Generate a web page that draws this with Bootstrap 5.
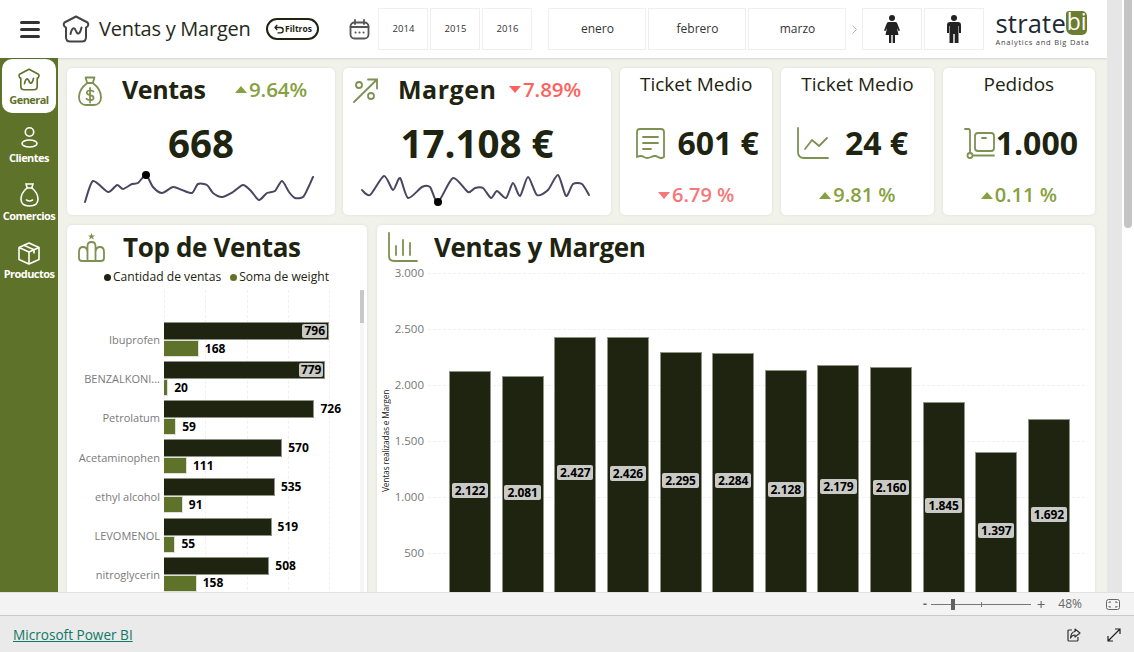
<!DOCTYPE html>
<html lang="es">
<head>
    <meta charset="UTF-8">
    <meta name="viewport" content="width=device-width, initial-scale=1.0">
    <title>Ventas y Margen</title>
    <link href="https://cdn.jsdelivr.net/npm/bootstrap@5.3.0/dist/css/bootstrap.min.css" rel="stylesheet">
    <style>
        html, body { height: 100%; overflow: hidden; }
        body { font-family: "Open Sans", "Noto Sans", sans-serif; color: #1e2410; background: #fff; }
        svg { display: block; flex: none; }

        .app-shell { height: 652px; }
        .app-top { height: 592px; }
        .report { width: 1107px; background: #f1f2ea; }
        .gutter { width: 15px; background: #e6e6e6; }
        .sbar { width: 12px; background: #fff; padding: 0 2px; }
        .sbar-thumb { height: 228px; background: #c4c4c4; border-radius: 0 0 4px 4px; }

        /* header */
        .topbar { height: 58px; background: #fff; box-shadow: 0 1px 2px rgba(90, 90, 70, .18); position: relative; z-index: 2; }
        .burger { width: 20px; margin-left: 20px; margin-right: 22px; }
        .burger i { display: block; height: 3px; background: #333; border-radius: 2px; margin: 4px 0; }
        .report-title { font-size: 20px; margin: 0 16px 0 9px; color: #252a20; white-space: nowrap; letter-spacing: -.25px; }
        .pill { width: 53px; height: 22px; border: 2px solid #1e2410; border-radius: 11px; font-size: 8.5px; font-weight: 700; gap: 1px; margin-right: 30px; }
        .slicer { border: 1px solid #efefef; height: 42px; color: #333; background: #fff; }
        .slicer-y { width: 50px; font-size: 9.5px; margin-right: 2px; }
        .slicer-m { width: 98px; font-size: 12px; margin-right: 2px; }
        .slicer-g { width: 60px; margin-right: 2px; }
        .chev { width: 16px; margin-right: 0; color: #aaa; }
        .brand { margin-left: 9px; width: 92px; }
        .brand-word { font-size: 25.5px; line-height: 24px; height: 24px; color: #1b2a33; letter-spacing: .2px; }
        .brand-bi { width: 24px; height: 24px; background: #6a7d30; border-radius: 3px 5px 5px 7px; color: #fff; font-size: 23px; line-height: 20px; text-align: center; margin-left: auto; letter-spacing: 0; }
        .brand-sub { font-size: 7.5px; letter-spacing: .75px; color: #444; white-space: nowrap; line-height: 10px; margin-top: 2px; }

        /* sidebar */
        .sidenav { width: 58px; background: #5f7229; padding: 1px 2px 0; }
        .side-item { width: 54px; height: 54px; margin-bottom: 4px; padding-top: 7px; border-radius: 10px; color: #fff; }
        .side-item.active { background: #fff; color: #5f7229; }
        .side-ico { height: 26px; }
        .side-label { font-size: 11px; font-weight: 700; line-height: 14px; margin-top: 1px; letter-spacing: -.55px; white-space: nowrap; }

        /* cards */
        .board { padding: 10px 12px 0 9px; gap: 10px; }
        .panel { background: #fff; border: 0; border-radius: 5px; box-shadow: 0 0 3px rgba(120, 120, 100, .16); }
        .kpi-row { gap: 9px; height: 147px; flex: none; }
        .kpi-wide { width: 268px; }
        .kpi-wide:first-child { margin-right: -1px; }
        .kpi-small { width: 152.5px; }
        .kpi-head { height: 44px; padding-top: 7px; }
        .kpi-name { font-size: 25px; font-weight: 700; line-height: 28px; letter-spacing: -.4px; }
        .kpi-name-m { letter-spacing: .5px; margin-left: -1px; }
        .kpi-delta { font-size: 20.5px; font-weight: 600; letter-spacing: -.1px; line-height: 28px; gap: 2px; margin-left: auto; }
        .delta-v { margin-right: 28px; }
        .delta-m { margin-right: 30px; }
        .kpi-value { height: 56px; font-size: 38.5px; font-weight: 700; line-height: 56px; padding-top: 3px; box-sizing: border-box; }
        .kpi-ico-a { margin: 1px 20px 0 11px; }
        .kpi-ico-b { margin: 3px 21px 0 10px; }
        .panel-head .kpi-ico-a { margin-top: 2px; }
        .panel-head .ico-top { margin-right: 18px; }
        .panel-head .ico-mix { margin-right: 16px; }
        .tick-name { height: 32px; padding-top: 4px; font-size: 19px; line-height: 24px; text-align: center; white-space: nowrap; }
        .tick-body { height: 86px; }
        .tick-a { padding-left: 3px; }
        .tick-b { padding-right: 10px; }
        .tick-c { padding-left: 4px; }
        .tick-value { font-size: 32px; font-weight: 700; line-height: 40px; white-space: nowrap; }
        .tick-delta { height: 18px; line-height: 18px; font-size: 20px; font-weight: 600; gap: 2px; }
        .is-up { color: #87a040; }
        .is-down { color: #fd625e; }
        .is-down2 { color: #f4777a; }
        .tri-up, .tri-down { width: 0; height: 0; border-left: 6px solid transparent; border-right: 6px solid transparent; }
        .tri-up { border-bottom: 7px solid currentColor; }
        .tri-down { border-top: 7px solid currentColor; }

        /* lower panels */
        .lower-row { gap: 10px; flex: none; height: 420px; }
        .top-panel { width: 300px; }
        .mix-panel { width: 718px; }
        .panel-title { font-size: 26px; font-weight: 700; line-height: 34px; white-space: nowrap; letter-spacing: -.35px; }
        .panel-head { height: 42px; padding-top: 5px; }
        .legend-line { font-size: 12.1px; line-height: 16px; gap: 2px; padding-left: 37px; margin-top: 2px; white-space: nowrap; }
        .legend-dot { width: 7px; height: 7px; border-radius: 50%; margin-top: 1px; }
        .dot-dark { background: #1e2410; }
        .dot-green { background: #5f7229; margin-left: 7px; }

        .hplot { margin-top: 5px; padding-top: 30px; height: 340px; }
        .hgrid { left: 97px; top: 0; width: 166px; height: 100%; }
        .hgrid i { width: 0; border-left: 1px dashed #f0f0f0; }
        .hrow { height: 39.1px; position: relative; }
        .hname { width: 93px; font-size: 11px; color: #7a7a7a; text-align: right; white-space: nowrap; margin-right: 4px; padding-top: 2px; }
        .hbar { height: 18px; background: #1e2410; border: 1px solid #8f9286; border-left-width: 0; }
        .hbar-b { height: 17px; background: #5f7229; border: 1px solid #dfe1d8; border-left-width: 0; }
        .hval { font-size: 12px; font-weight: 700; color: #000; line-height: 14px; margin-left: 6px; }
        .hval.in-bar { background: #c9cac5; border-radius: 2px; padding: 0 2px; margin: 0 1px 0 0; }
        .hscroll { left: 293px; top: 0; width: 4px; height: 100%; background: #f5f5f5; }
        .hscroll i { display: block; height: 33px; background: #c8c8c8; }

        .vaxis-name { width: 10px; margin-left: 4px; font-size: 8.5px; writing-mode: vertical-rl; transform: rotate(180deg); text-align: center; height: 336px; white-space: nowrap; letter-spacing: -.25px; color: #222; line-height: 10px; }
        .vticks { width: 33px; margin-right: 4px; font-size: 11.5px; color: #777; text-align: right; }
        .vticks div { height: 56.05px; line-height: 0; }
        .vplot { width: 657px; height: 336px; padding: 0 15px 0 21px; }
        .vgrid div { height: 56.05px; border-top: 1px dashed #f0f0f0; }
        .vbar { width: 42px; background: #1e2410; outline: 1px solid #8f9286; outline-offset: -1px; position: relative; }
        .vval { background: #c9cac5; border-radius: 2px; font-size: 12px; font-weight: 700; color: #000; padding: 0 3px; line-height: 15px; letter-spacing: -.1px; }
        .plot-row { margin-top: 6px; }

        /* power bi footer */
        .zoombar { height: 23px; background: #f3f3f3; border-top: 1px solid #e2e2e2; color: #666; font-size: 12px; padding-right: 14px; }
        .zoom-minus { font-weight: 700; }
        .zoom-plus { font-size: 15px; font-weight: 500; }
        .zoom-pct { margin: 0 24px 0 13px; }
        .zoom-track { width: 100px; height: 1px; background: #777; margin: 0 6px 0 4px; position: relative; }
        .zoom-thumb { position: absolute; left: 20px; top: -5px; width: 4px; height: 11px; background: #606060; }
        .zoom-mark { position: absolute; left: 50px; top: -2px; width: 1px; height: 5px; background: #777; }
        .pbi-foot { height: 37px; background: #eaeaea; border-top: 1px solid #c9c9c9; padding: 2px 13px 0; }
        .pbi-link { color: #117865; font-size: 13.6px; font-weight: 500; }
        .foot-expand { margin-left: 26px; }
    </style>
</head>
<body>
<div class="app-shell d-flex flex-column">
    <div class="app-top d-flex">
        <div class="report d-flex flex-column overflow-hidden">
            <header class="topbar d-flex align-items-center flex-shrink-0">
                <div class="burger"><i></i><i></i><i></i></div>
                <svg width="28" height="28" viewBox="0 0 28 28" fill="none" stroke="#444" stroke-width="2" stroke-linejoin="round" stroke-linecap="round"><path d="M14 1.5 25.5 7.5Q27 9 25.5 11.5L24 12.5V22Q24 26.5 20 26.5H8Q4 26.5 4 22V12.5L2.500 11.500Q1 9 2.500 7.500Z"/><path d="M8.500 19C10 12 12.500 12 14 16S18 19.500 19.500 12.500"/></svg>
                <div class="report-title">Ventas y Margen</div>
                <div class="pill d-flex align-items-center justify-content-center">
                    <svg width="10" height="10" viewBox="0 0 10 10" fill="none" stroke="#1e2410" stroke-width="1.300"><path d="M1 3.500H6.500A2.500 2.500 0 0 1 6.500 8.800H3.500"/><path d="M3.200 1 1 3.500 3.200 6"/></svg>
                    <span>Filtros</span>
                </div>
                <svg class="me-2" width="21" height="21" viewBox="0 0 21 21" fill="none" stroke="#555" stroke-width="1.800" stroke-linecap="round"><rect x="1.500" y="3.500" width="18" height="16" rx="4"/><path d="M1.500 8H19.500M6 1V5M15 1V5"/><path d="M6.500 13.500h.1M10.500 13.500h.1M14.500 13.500h.1" stroke-width="2"/></svg>
                <div class="slicer slicer-y d-flex align-items-center justify-content-center ms-0">2014</div>
                <div class="slicer slicer-y d-flex align-items-center justify-content-center">2015</div>
                <div class="slicer slicer-y d-flex align-items-center justify-content-center me-3">2016</div>
                <div class="slicer slicer-m d-flex align-items-center justify-content-center">enero</div>
                <div class="slicer slicer-m d-flex align-items-center justify-content-center">febrero</div>
                <div class="slicer slicer-m d-flex align-items-center justify-content-center me-0">marzo</div>
                <div class="chev d-flex justify-content-center">
                    <svg width="5" height="9" viewBox="0 0 5 9" fill="none" stroke="#b5b5b5"><path d="M.5.500 4.500 4.500.5 8.500"/></svg>
                </div>
                <div class="slicer slicer-g d-flex align-items-center justify-content-center">
                    <svg width="16" height="28" viewBox="0 0 16 28" fill="#222"><circle cx="8" cy="3" r="3"/><path d="M4.500 7H11.500Q13 7 13.500 9L16 15.500 14.500 16 13 13 14.500 20H11V28H8.700V20H7.300V28H5V20H1.500L3 13 1.500 16 0 15.500 2.500 9Q3 7 4.500 7Z"/></svg>
                </div>
                <div class="slicer slicer-g d-flex align-items-center justify-content-center">
                    <svg width="14" height="28" viewBox="0 0 14 28" fill="#222"><circle cx="7" cy="3" r="3"/><path d="M3 7H11Q14 7 14 10V18H12V11H11.500V28H7.700V19H6.300V28H2.500V11H2V18H0V10Q0 7 3 7Z"/></svg>
                </div>
                <div class="brand">
                    <div class="d-flex brand-word"><span>strate</span><span class="brand-bi">bi</span></div>
                    <div class="brand-sub">Analytics and Big Data</div>
                </div>
            </header>
            <div class="d-flex flex-grow-1 overflow-hidden">
                <nav class="sidenav nav flex-column flex-nowrap">
                    <div class="side-item active text-center">
                        <div class="side-ico d-flex justify-content-center align-items-center">
                            <svg width="24" height="23" viewBox="0 0 28 28" fill="none" stroke="currentColor" stroke-width="2" stroke-linejoin="round" stroke-linecap="round"><path d="M14 1.500 25.500 7.500Q27 9 25.500 11.500L24 12.500V22Q24 26.500 20 26.500H8Q4 26.500 4 22V12.500L2.500 11.500Q1 9 2.500 7.500Z"/><path d="M8.500 19C10 12 12.500 12 14 16S18 19.500 19.500 12.500"/></svg>
                        </div>
                        <div class="side-label">General</div>
                    </div>
                    <div class="side-item text-center">
                        <div class="side-ico d-flex justify-content-center align-items-center">
                            <svg width="17" height="21" viewBox="0 0 17 21" fill="none" stroke="currentColor" stroke-width="1.600"><circle cx="8.500" cy="5" r="4.200"/><ellipse cx="8.500" cy="16.500" rx="7.500" ry="3.500"/></svg>
                        </div>
                        <div class="side-label">Clientes</div>
                    </div>
                    <div class="side-item text-center">
                        <div class="side-ico d-flex justify-content-center align-items-center">
                            <svg width="19" height="24" viewBox="0 0 19 24" fill="none" stroke="currentColor" stroke-width="1.600" stroke-linecap="round"><path d="M6 1H13L11.800 5H7.200Z"/><path d="M7 5C3.500 8 1 11.500 1 16 1 21 4 23 9.500 23S18 21 18 16C18 11.500 15.500 8 12 5"/><path d="M6.500 17Q9.500 19 12.500 17"/></svg>
                        </div>
                        <div class="side-label">Comercios</div>
                    </div>
                    <div class="side-item text-center">
                        <div class="side-ico d-flex justify-content-center align-items-center">
                            <svg width="22" height="23" viewBox="0 0 22 23" fill="none" stroke="currentColor" stroke-width="1.600" stroke-linejoin="round"><path d="M11 1 21 5.500V17.500L11 22 1 17.500V5.500Z"/><path d="M1 5.500 11 10 21 5.500M11 10V22M6 3.300 16 7.800V11.500"/></svg>
                        </div>
                        <div class="side-label">Productos</div>
                    </div>
                </nav>

                <main class="board flex-grow-1 d-flex flex-column overflow-hidden">
                    <section class="kpi-row d-flex">
                        <div class="panel kpi-wide">
                            <div class="kpi-head d-flex align-items-start">
                                <svg class="kpi-ico-a" width="24" height="30" viewBox="0 0 24 30" fill="none" stroke="#7d9152" stroke-width="1.800" stroke-linejoin="round" stroke-linecap="round"><path d="M7.500 1.500H16.500L14.800 7H9.200Z"/><path d="M9.200 7C4 11 1 16 1 21 1 26 4 29 8 29H16C20 29 23 26 23 21 23 16 20 11 14.800 7"/><path d="M15.500 15.500C14.500 13.800 9.500 13.800 8.800 16 8.300 18.500 11 18.800 12 19S16 20 15.500 22.500C14.800 24.800 9.500 24.500 8.500 22.800M12 12V26.500"/></svg>
                                <div class="kpi-name">Ventas</div>
                                <div class="kpi-delta delta-v is-up d-flex align-items-center"><span class="tri-up"></span>9.64%</div>
                            </div>
                            <div class="kpi-value text-center">668</div>
                            <svg id="sparkA" width="268" height="43" viewBox="67 168 268 43" fill="none"></svg>
                        </div>
                        <div class="panel kpi-wide">
                            <div class="kpi-head d-flex align-items-start">
                                <svg class="kpi-ico-b" width="25" height="25" viewBox="0 0 25 25" fill="none" stroke="#7d9152" stroke-width="1.800" stroke-linecap="round"><path d="M1 24 24 1.500M15 1.500H24V10.500"/><circle cx="6" cy="7" r="3"/><circle cx="18" cy="18" r="3"/></svg>
                                <div class="kpi-name kpi-name-m">Margen</div>
                                <div class="kpi-delta delta-m is-down d-flex align-items-center"><span class="tri-down"></span>7.89%</div>
                            </div>
                            <div class="kpi-value text-center">17.108 €</div>
                            <svg id="sparkB" width="268" height="43" viewBox="343 168 268 43" fill="none"></svg>
                        </div>
                        <div class="panel kpi-small">
                            <div class="tick-name">Ticket Medio</div>
                            <div class="tick-body tick-a d-flex align-items-center justify-content-center gap-2">
                                <svg class="me-1" width="29" height="31" viewBox="0 0 29 31" fill="none" stroke="#7d9152" stroke-width="1.800" stroke-linecap="round" stroke-linejoin="round"><path d="M1 4Q1 1 4 1H25Q28 1 28 4V29Q25 31 22 29T15 29 8 29 1 29Z"/><path d="M7 9H22M7 15H22M7 21H15"/></svg>
                                <div class="tick-value">601 €</div>
                            </div>
                            <div class="tick-delta is-down2 d-flex align-items-center justify-content-center"><span class="tri-down"></span>6.79 %</div>
                        </div>
                        <div class="panel kpi-small">
                            <div class="tick-name">Ticket Medio</div>
                            <div class="tick-body tick-b d-flex align-items-center justify-content-center gap-3">
                                <svg width="32" height="32" viewBox="0 0 32 32" fill="none" stroke="#7d9152" stroke-width="1.800" stroke-linecap="round" stroke-linejoin="round"><path d="M1 1V25Q1 31 7 31H31"/><path d="M8 22 15 13 22 19 30 11"/></svg>
                                <div class="tick-value">24 €</div>
                            </div>
                            <div class="tick-delta is-up d-flex align-items-center justify-content-center"><span class="tri-up"></span>9.81 %</div>
                        </div>
                        <div class="panel kpi-small">
                            <div class="tick-name">Pedidos</div>
                            <div class="tick-body tick-c d-flex align-items-center justify-content-center">
                                <svg width="32" height="31" viewBox="0 0 32 31" fill="none" stroke="#7d9152" stroke-width="1.800" stroke-linecap="round" stroke-linejoin="round"><path d="M1 1H4.500Q6 1 6 3V25"/><circle cx="6" cy="27.500" r="2.500"/><path d="M9 27.500H30"/><rect x="11" y="5" width="19" height="18" rx="3"/><path d="M18 10H22"/></svg>
                                <div class="tick-value">1.000</div>
                            </div>
                            <div class="tick-delta is-up d-flex align-items-center justify-content-center"><span class="tri-up"></span>0.11 %</div>
                        </div>
                    </section>

                    <section class="lower-row d-flex">
                        <div class="panel top-panel overflow-hidden">
                            <div class="panel-head d-flex align-items-start">
                                <svg class="kpi-ico-a ico-top" width="27" height="30" viewBox="0 0 27 30" fill="none" stroke="#7d9152" stroke-width="1.800" stroke-linejoin="round"><path d="M13.500 1 14.500 3.500H17L15 5 15.800 7.500 13.500 6 11.200 7.500 12 5 10 3.500H12.500Z" fill="#7d9152" stroke="none"/><path d="M9.500 29H4Q1 29 1 26V20Q1 15 5 15T9.500 20ZM9.500 29V14Q9.500 10 13.500 10T17.500 14V29ZM17.500 29H23Q26 29 26 26V20Q26 15 22 15T17.500 20Z"/></svg>
                                <div class="panel-title">Top de Ventas</div>
                            </div>
                            <div class="legend-line d-flex align-items-center">
                                <span class="legend-dot dot-dark"></span><span>Cantidad de ventas</span>
                                <span class="legend-dot dot-green"></span><span>Soma de weight</span>
                            </div>
                            <div class="hplot position-relative">
                                <div class="hgrid position-absolute d-flex justify-content-between"><i></i><i></i><i></i><i></i><i></i></div>
                                <div class="hscroll position-absolute"><i></i></div>
                                <div id="hbars"></div>
                            </div>
                        </div>

                        <div class="panel mix-panel overflow-hidden">
                            <div class="panel-head d-flex align-items-start">
                                <svg class="kpi-ico-a ico-mix" width="30" height="30" viewBox="0 0 30 30" fill="none" stroke="#7d9152" stroke-width="1.800" stroke-linecap="round"><path d="M1 1V24Q1 29 6 29H29"/><path d="M8 14V23M15 8V23M22 11V23"/></svg>
                                <div class="panel-title">Ventas y Margen</div>
                            </div>
                            <div class="plot-row d-flex">
                                <div class="vaxis-name">Ventas realizadas e Margen</div>
                                <div class="vticks">
                                    <div>3.000</div><div>2.500</div><div>2.000</div><div>1.500</div><div>1.000</div><div>500</div>
                                </div>
                                <div class="vplot position-relative">
                                    <div class="vgrid position-absolute top-0 start-0 w-100"><div></div><div></div><div></div><div></div><div></div><div></div></div>
                                    <div id="vbars" class="d-flex justify-content-between align-items-end h-100 position-relative"></div>
                                </div>
                            </div>
                        </div>
                    </section>
                </main>
            </div>
        </div>
        <div class="gutter"></div>
        <div class="sbar"><div class="sbar-thumb"></div></div>
    </div>

    <div class="zoombar d-flex align-items-center justify-content-end">
        <span class="zoom-minus">-</span>
        <div class="zoom-track"><span class="zoom-thumb"></span><span class="zoom-mark"></span></div>
        <span class="zoom-plus">+</span>
        <span class="zoom-pct">48%</span>
        <svg width="14" height="11" viewBox="0 0 14 11" fill="none" stroke="#666"><rect x=".5" y=".5" width="13" height="10" rx="2"/><path d="M3 4V3H5M9 3H11V4M3 7V8H5M9 8H11V7"/></svg>
    </div>
    <footer class="pbi-foot d-flex align-items-center">
        <a class="pbi-link" href="#">Microsoft Power BI</a>
        <svg class="ms-auto" width="14" height="14" viewBox="0 0 14 14" fill="none" stroke="#333" stroke-width="1.200" stroke-linejoin="round"><path d="M5 2H2Q1 2 1 3V12Q1 13 2 13H10Q11 13 11 12V9"/><path d="M8 1 13 5 8 9V7Q5 7 3.500 10 4 4 8 3.500Z"/></svg>
        <svg class="foot-expand" width="14" height="14" viewBox="0 0 14 14" fill="none" stroke="#222" stroke-width="1.200"><path d="M1 13 13 1M8 1H13V6M1 8V13H6"/></svg>
    </footer>
</div>

<script src="https://cdn.jsdelivr.net/npm/bootstrap@5.3.0/dist/js/bootstrap.bundle.min.js"></script>
<script>
    // sparklines, points in page coordinates, smoothed with catmull-rom
    function drawSpark(id, pts, dot) {
        const svg = document.getElementById(id);
        let d = 'M' + pts[0][0] + ' ' + pts[0][1];
        for (let i = 0; i < pts.length - 1; i++) {
            const p0 = pts[Math.max(i - 1, 0)], p1 = pts[i], p2 = pts[i + 1], p3 = pts[Math.min(i + 2, pts.length - 1)];
            const c1x = p1[0] + (p2[0] - p0[0]) / 8, c1y = p1[1] + (p2[1] - p0[1]) / 8;
            const c2x = p2[0] - (p3[0] - p1[0]) / 8, c2y = p2[1] - (p3[1] - p1[1]) / 8;
            d += ' C' + c1x + ' ' + c1y + ' ' + c2x + ' ' + c2y + ' ' + p2[0] + ' ' + p2[1];
        }
        svg.innerHTML = '<path d="' + d + '" stroke="#4a4560" stroke-width="2" stroke-linejoin="round" stroke-linecap="round"/>' +
            '<circle cx="' + dot[0] + '" cy="' + dot[1] + '" r="4" fill="#000"/>';
    }
    drawSpark('sparkA', [[85,202],[93,181],[108,192],[117,185],[123,189],[132,184],[138,183],[146,175],[153,187],[162,193],[173,187],[182,190],[192,193],[198,184],[207,185],[213,193],[222,197],[233,192],[243,185],[251,191],[259,200],[267,193],[275,191],[282,181],[289,192],[295,198],[303,197],[308,188],[313,177]], [146,175]);
    drawSpark('sparkB', [[362,190],[370,195],[384,176],[393,190],[400,178],[408,198],[422,187],[430,187],[438,202],[453,178],[468,192],[475,188],[483,188],[491,198],[497,191],[506,198],[513,183],[520,196],[528,177],[537,195],[548,190],[558,175],[566,196],[573,184],[582,184],[589,195]], [438,202]);

    // top de ventas
    const topRows = [
        ['Ibuprofen', 796, 168], ['BENZALKONI...', 779, 20], ['Petrolatum', 726, 59],
        ['Acetaminophen', 570, 111], ['ethyl alcohol', 535, 91], ['LEVOMENOL', 519, 55], ['nitroglycerin', 508, 158]
    ];
    const hbars = document.getElementById('hbars');
    topRows.forEach(function (r) {
        const row = document.createElement('div');
        row.className = 'hrow d-flex align-items-center';
        const big = r[1] > 750;
        row.innerHTML = '<div class="hname">' + r[0] + '</div><div class="flex-grow-1">' +
            '<div class="d-flex align-items-center"><div class="hbar d-flex align-items-center justify-content-end" data-w="' + r[1] + '">' +
            (big ? '<span class="hval in-bar">' + r[1] + '</span>' : '') + '</div>' +
            (big ? '' : '<span class="hval">' + r[1] + '</span>') + '</div>' +
            '<div class="d-flex align-items-center"><div class="hbar-b" data-w="' + r[2] + '"></div><span class="hval">' + r[2] + '</span></div></div>';
        hbars.appendChild(row);
    });
    hbars.querySelectorAll('[data-w]').forEach(function (el) {
        el.style.width = (el.dataset.w * 0.2073) + 'px';
    });

    // ventas y margen
    const vbars = document.getElementById('vbars');
    [2122, 2081, 2427, 2426, 2295, 2284, 2128, 2179, 2160, 1845, 1397, 1692].forEach(function (v) {
        const bar = document.createElement('div');
        bar.className = 'vbar d-flex align-items-center justify-content-center';
        bar.style.height = (v * 0.1121) + 'px';
        bar.innerHTML = '<span class="vval">' + v.toLocaleString('de-DE') + '</span>';
        vbars.appendChild(bar);
    });
</script>
</body>
</html>
